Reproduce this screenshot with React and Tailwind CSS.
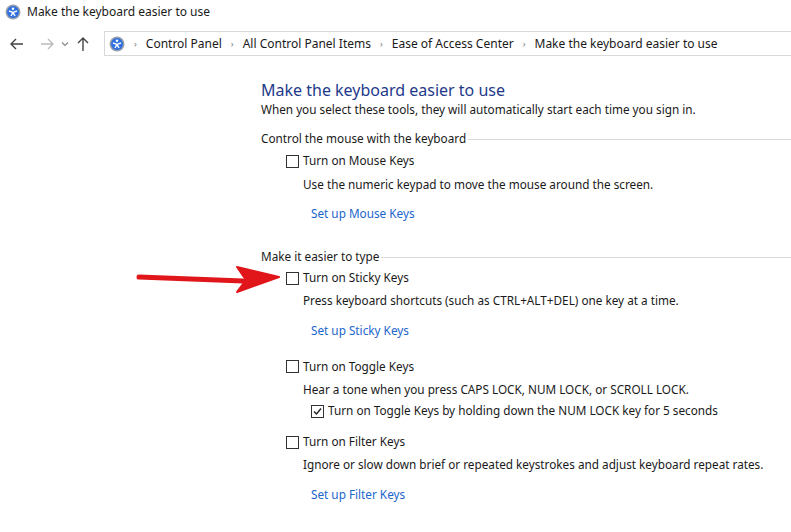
const F = { fontFamily: '"Noto Sans", "Open Sans", sans-serif' };

function Icon({ s = 16 }) {
  return (
    <svg width={s} height={s} viewBox="0 0 16 16">
      <circle cx="8" cy="8" r="7.5" fill="#9aa0aa" />
      <circle cx="8" cy="8" r="6" fill="#2f6fe0" />
      <circle cx="8" cy="4.8" r="1.3" fill="#fff" />
      <path d="M4 7 L8 8.3 L12 7 M8 8.3 L6 12 M8 8.3 L10 12" stroke="#fff" strokeWidth="1.4" fill="none" />
    </svg>
  );
}

function Arrow({ d, color }) {
  return (
    <svg width="16" height="16" viewBox="0 0 16 16"><path d={d} stroke={color} strokeWidth="1.4" fill="none" /></svg>
  );
}

function Box({ checked }) {
  return (
    <div className="w-[13px] h-[13px] border border-[#333] bg-white flex items-center justify-center shrink-0">
      {checked && (
        <svg width="11" height="11" viewBox="0 0 11 11"><path d="M2 5.5 L4.5 8 L9 2.5" stroke="#222" strokeWidth="1.4" fill="none" /></svg>
      )}
    </div>
  );
}

function Check({ label, checked, className = "" }) {
  return (
    <div className={"flex items-center gap-[4px] h-[18px] " + className}>
      <Box checked={checked} />
      <span>{label}</span>
    </div>
  );
}

function Group({ title }) {
  return (
    <div className="flex items-center h-[18px]">
      <span>{title}</span>
      <div className="flex-1 h-px bg-[#d9d9d9] ml-[2px]" />
    </div>
  );
}

export default function App() {
  return (
    <div className="w-[791px] h-[532px] bg-white text-[11.75px] text-[#1a1a1a] relative overflow-hidden" style={F}>
      <div className="flex items-center gap-[6px] h-[22px] pl-[5px] pt-[1px] text-[12px]">
        <Icon />
        <span>Make the keyboard easier to use</span>
      </div>
      <div className="flex items-center h-[25px] mt-[9px]">
        <div className="flex items-center w-[104px] pl-[9px]">
          <Arrow d="M14 8 H2 M7 3 L2 8 L7 13" color="#444" />
          <div className="w-[14px]" />
          <Arrow d="M2 8 H14 M9 3 L14 8 L9 13" color="#bbb" />
          <div className="w-[6px]" />
          <svg width="8" height="8" viewBox="0 0 8 8"><path d="M1 2.5 L4 5.5 L7 2.5" stroke="#888" strokeWidth="1.2" fill="none" /></svg>
          <div className="w-[6px]" />
          <Arrow d="M8 15 V2 M3 7 L8 2 L13 7" color="#444" />
        </div>
        <div className="flex-1 h-[25px] border border-[#d9d9d9] border-r-0 flex items-center pl-[4px] gap-[9px] text-[12px]">
          <Icon />
          <span className="text-[#777] text-[9px]">›</span><span>Control Panel</span>
          <span className="text-[#777] text-[9px]">›</span><span>All Control Panel Items</span>
          <span className="text-[#777] text-[9px]">›</span><span>Ease of Access Center</span>
          <span className="text-[#777] text-[9px]">›</span><span>Make the keyboard easier to use</span>
        </div>
      </div>
      <div className="pl-[261px] mt-[24px] flex flex-col">
        <div className="text-[16px] text-[#1e3a8a] leading-[20px]">Make the keyboard easier to use</div>
        <div className="leading-[16px] mt-[1px]">When you select these tools, they will automatically start each time you sign in.</div>
        <div className="mt-[13px]"><Group title="Control the mouse with the keyboard" /></div>
        <Check className="ml-[25px] mt-[4px]" label="Turn on Mouse Keys" />
        <div className="ml-[42px] mt-[6px]">Use the numeric keypad to move the mouse around the screen.</div>
        <div className="ml-[50px] mt-[11px] text-[#1a66cc]">Set up Mouse Keys</div>
        <div className="mt-[26px]"><Group title="Make it easier to type" /></div>
        <Check className="ml-[25px] mt-[3px]" label="Turn on Sticky Keys" />
        <div className="ml-[42px] mt-[5px]">Press keyboard shortcuts (such as CTRL+ALT+DEL) one key at a time.</div>
        <div className="ml-[50px] mt-[12px] text-[#1a66cc]">Set up Sticky Keys</div>
        <Check className="ml-[25px] mt-[18px]" label="Turn on Toggle Keys" />
        <div className="ml-[42px] mt-[5px]">Hear a tone when you press CAPS LOCK, NUM LOCK, or SCROLL LOCK.</div>
        <Check className="ml-[50px] mt-[4px]" checked label="Turn on Toggle Keys by holding down the NUM LOCK key for 5 seconds" />
        <Check className="ml-[25px] mt-[13px]" label="Turn on Filter Keys" />
        <div className="ml-[42px] mt-[5px]">Ignore or slow down brief or repeated keystrokes and adjust keyboard repeat rates.</div>
        <div className="ml-[50px] mt-[12px] text-[#1a66cc]">Set up Filter Keys</div>
      </div>
      <svg className="absolute left-[135px] top-[264px]" width="150" height="32" viewBox="0 0 150 32">
        <path d="M4 13 L108 17" stroke="#e0161b" strokeWidth="5" strokeLinecap="round" />
        <path d="M102 3 L144 13 L102 28 L111 16 Z" fill="#e0161b" strokeLinejoin="round" stroke="#e0161b" strokeWidth="2" />
      </svg>
    </div>
  );
}
